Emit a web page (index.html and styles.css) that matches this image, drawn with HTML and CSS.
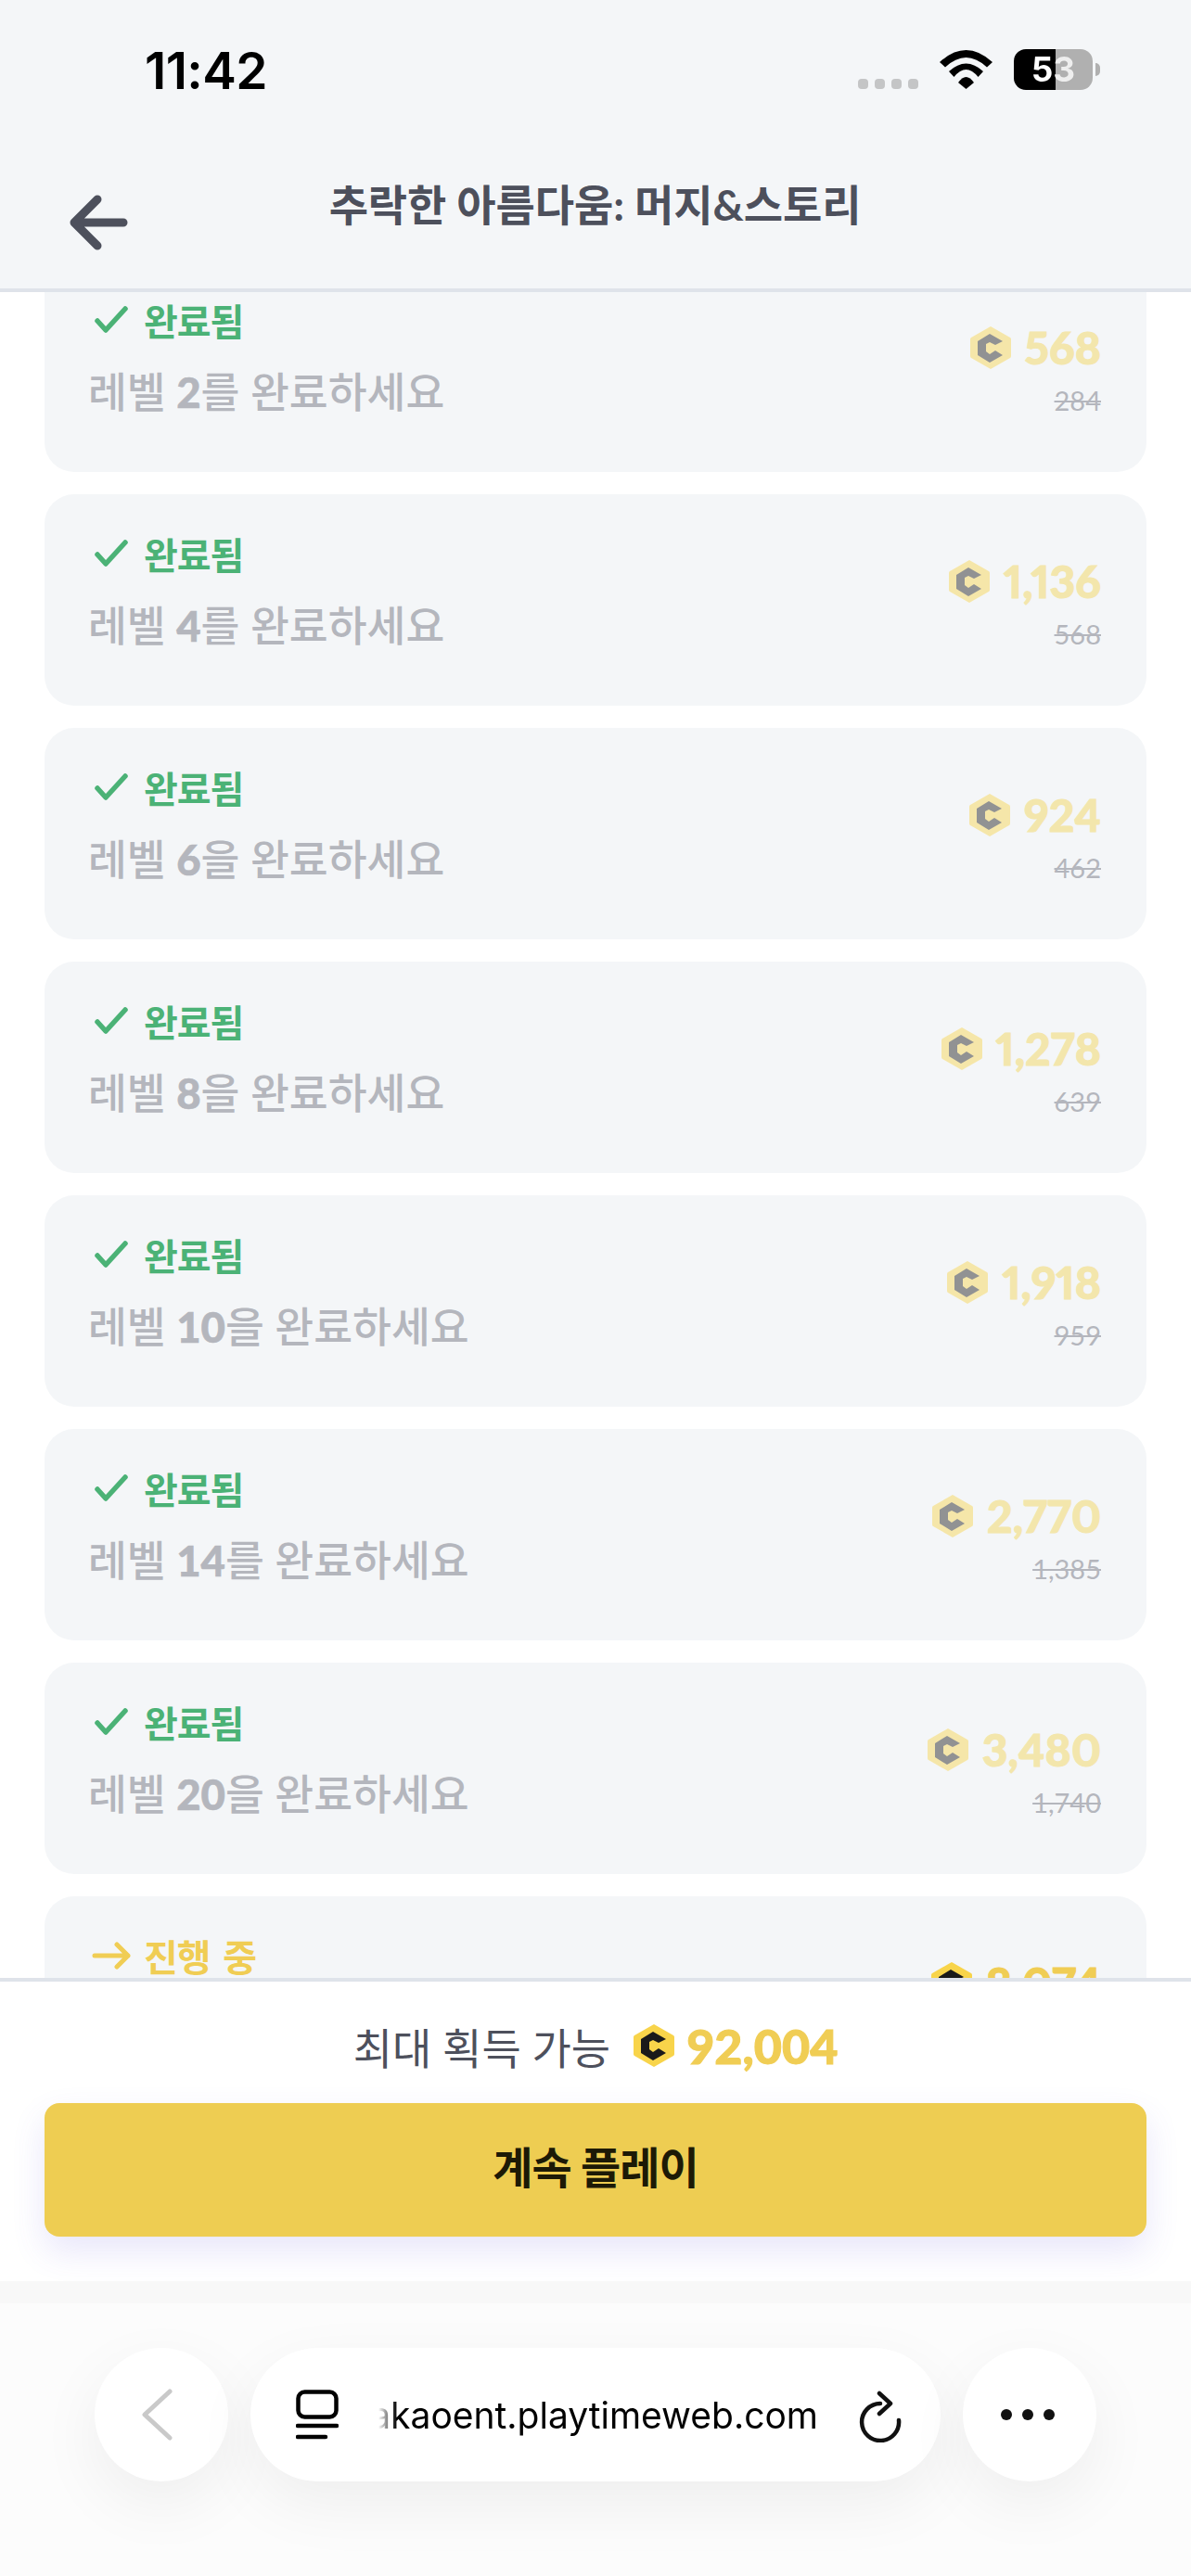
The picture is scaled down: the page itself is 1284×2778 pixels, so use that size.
FILE: index.html
```html
<!DOCTYPE html>
<html lang="ko">
<head>
    <meta charset="UTF-8">
    <meta name="viewport" content="width=device-width, initial-scale=1.0">
    <title>추락한 아름다움: 머지&amp;스토리</title>
    <link rel="stylesheet" href="styles.css">
</head>
<body>
    <svg class="defs">
        <symbol id="coin" viewBox="0 0 46 48">
            <path class="coin-bg" d="M23 1 L44 13 Q45 13.6 45 15 V33 Q45 34.4 44 35 L23 47 L2 35 Q1 34.4 1 33 V15 Q1 13.6 2 13 Z"/>
            <path class="coin-c" d="M22 9 L36 17 L28 21 L22 18 L18 20 V28 L22 31 L28 27 L36 32 L22 40 L9 32 V17 Z"/>
        </symbol>
        <symbol id="check" viewBox="0 0 36 30">
            <path d="M3 16 L12 26 L33 3" fill="none" stroke="currentColor" stroke-width="5.5" stroke-linecap="round" stroke-linejoin="round"/>
        </symbol>
    </svg>

    <div class="top">
        <div class="status">
            <span class="time">11:42</span>
            <div class="status-right">
                <div class="signal"><i></i><i></i><i></i><i></i></div>
                <svg class="wifi" viewBox="0 0 57 42">
                    <path d="M0 13 Q28.500 -13 57 13 L51 18.500 Q28.500 -2.500 6 18.500 Z"/>
                    <path d="M10 23 Q28.500 6 47 23 L41.500 29 Q28.500 13 15.500 29 Z"/>
                    <path d="M20 35 Q28.500 23 37 35 L28.500 42 Z"/>
                </svg>
                <div class="battery"><span class="battery-num">53</span></div>
                <div class="battery-tip"></div>
            </div>
        </div>
        <div class="nav">
            <svg class="back" viewBox="0 0 66 60">
                <path d="M59 30 H6 M31 5 L6 30 L31 55" fill="none" stroke="currentColor" stroke-width="9" stroke-linecap="round" stroke-linejoin="round"/>
            </svg>
            <h1>추락한 아름다움: 머지&amp;스토리</h1>
        </div>
    </div>

    <div class="list">
        <div class="card done">
            <div class="card-left">
                <div class="state"><svg class="state-icon"><use href="#check"/></svg>완료됨</div>
                <div class="task">레벨 <b>2</b>를 완료하세요</div>
            </div>
            <div class="card-right">
                <div class="amount"><svg class="coin"><use href="#coin"/></svg><span class="faded">568</span></div>
                <s class="old">284</s>
            </div>
        </div>
        <div class="card done">
            <div class="card-left">
                <div class="state"><svg class="state-icon"><use href="#check"/></svg>완료됨</div>
                <div class="task">레벨 <b>4</b>를 완료하세요</div>
            </div>
            <div class="card-right">
                <div class="amount"><svg class="coin"><use href="#coin"/></svg><span class="faded">1,136</span></div>
                <s class="old">568</s>
            </div>
        </div>
        <div class="card done">
            <div class="card-left">
                <div class="state"><svg class="state-icon"><use href="#check"/></svg>완료됨</div>
                <div class="task">레벨 <b>6</b>을 완료하세요</div>
            </div>
            <div class="card-right">
                <div class="amount"><svg class="coin"><use href="#coin"/></svg><span class="faded">924</span></div>
                <s class="old">462</s>
            </div>
        </div>
        <div class="card done">
            <div class="card-left">
                <div class="state"><svg class="state-icon"><use href="#check"/></svg>완료됨</div>
                <div class="task">레벨 <b>8</b>을 완료하세요</div>
            </div>
            <div class="card-right">
                <div class="amount"><svg class="coin"><use href="#coin"/></svg><span class="faded">1,278</span></div>
                <s class="old">639</s>
            </div>
        </div>
        <div class="card done">
            <div class="card-left">
                <div class="state"><svg class="state-icon"><use href="#check"/></svg>완료됨</div>
                <div class="task">레벨 <b>10</b>을 완료하세요</div>
            </div>
            <div class="card-right">
                <div class="amount"><svg class="coin"><use href="#coin"/></svg><span class="faded">1,918</span></div>
                <s class="old">959</s>
            </div>
        </div>
        <div class="card done">
            <div class="card-left">
                <div class="state"><svg class="state-icon"><use href="#check"/></svg>완료됨</div>
                <div class="task">레벨 <b>14</b>를 완료하세요</div>
            </div>
            <div class="card-right">
                <div class="amount"><svg class="coin"><use href="#coin"/></svg><span class="faded">2,770</span></div>
                <s class="old">1,385</s>
            </div>
        </div>
        <div class="card done">
            <div class="card-left">
                <div class="state"><svg class="state-icon"><use href="#check"/></svg>완료됨</div>
                <div class="task">레벨 <b>20</b>을 완료하세요</div>
            </div>
            <div class="card-right">
                <div class="amount"><svg class="coin"><use href="#coin"/></svg><span class="faded">3,480</span></div>
                <s class="old">1,740</s>
            </div>
        </div>
        <div class="card active">
            <div class="card-left">
                <div class="state">
                    <svg class="arrow" viewBox="0 0 42 30"><path d="M3 15 H39 M27 3 L39 15 L27 27" fill="none" stroke="currentColor" stroke-width="5" stroke-linecap="round" stroke-linejoin="round"/></svg>
                    진행 중
                </div>
            </div>
            <div class="card-right">
                <div class="amount"><svg class="coin"><use href="#coin"/></svg><span>8,074</span></div>
            </div>
        </div>
    </div>

    <div class="footer">
        <div class="max">
            <span>최대 획득 가능</span>
            <svg class="coin"><use href="#coin"/></svg>
            <b>92,004</b>
        </div>
        <button class="play">계속 플레이</button>
    </div>

    <div class="band"></div>
    <div class="browser">
        <div class="pill round">
            <svg class="b-back" viewBox="0 0 36 56"><path d="M32 3 L5 28 L32 53" fill="none" stroke="#c9c9c9" stroke-width="5" stroke-linecap="round" stroke-linejoin="round"/></svg>
        </div>
        <div class="pill url">
            <svg class="b-tab" viewBox="0 0 46 54">
                <rect x="2.500" y="2.500" width="41" height="27" rx="7" fill="none" stroke="#000" stroke-width="4.500"/>
                <path d="M2 39 H44 M2 51 H32" fill="none" stroke="#000" stroke-width="4.500" stroke-linecap="round"/>
            </svg>
            <div class="url-text"><span>kakaoent.playtimeweb.com</span></div>
            <svg class="b-reload" viewBox="0 0 50 56"><path d="M24 14 A20 20 0 1 0 44 32 M23 3 L35 14 L23 25" fill="none" stroke="#111" stroke-width="4.500" stroke-linecap="round" stroke-linejoin="round"/></svg>
        </div>
        <div class="pill round">
            <div class="dots"><i></i><i></i><i></i></div>
        </div>
    </div>
</body>
</html>
```

FILE: styles.css
```css
* {
    box-sizing: border-box;
}

html, body {
    margin: 0;
    height: 2778px;
    overflow: hidden;
}

body {
    display: flex;
    flex-direction: column;
    width: 1284px;
    background: #fff;
    font-family: "Lato", "Noto Sans CJK KR", sans-serif;
}

.defs {
    position: absolute;
    width: 0;
    height: 0;
}

/* top bar */
.top {
    height: 315px;
    flex: none;
    background: #f4f6f8;
    border-bottom: 4px solid #dfe3ea;
    position: relative;
    z-index: 2;
}

.status {
    height: 130px;
    display: flex;
    justify-content: space-between;
    padding: 44px 98px 0 156px;
}

.time {
    font-family: "Inter", sans-serif;
    font-weight: 600;
    font-size: 55px;
    line-height: 64px;
    letter-spacing: -0.6px;
    color: #000;
}

.status-right {
    display: flex;
    align-items: flex-start;
}

.signal {
    display: flex;
    gap: 7px;
    margin-top: 41px;
    margin-right: 23px;
}

.signal i {
    width: 11px;
    height: 11px;
    border-radius: 4px;
    background: #c4c5c6;
}

.wifi {
    width: 57px;
    height: 42px;
    margin-top: 10px;
    margin-right: 23px;
    flex: none;
}

.battery {
    width: 85px;
    height: 44px;
    margin-top: 9px;
    border-radius: 13px;
    background: linear-gradient(to right, #000 0 53%, #b0b0b0 53% 100%);
    text-align: center;
}

.battery-num {
    display: inline-block;
    font-family: "Inter", sans-serif;
    font-weight: 700;
    font-size: 37px;
    line-height: 44px;
    background: linear-gradient(to right, #fff 0 52%, #eee 52% 100%);
    -webkit-background-clip: text;
    background-clip: text;
    color: transparent;
}

.battery-tip {
    width: 5px;
    height: 14px;
    margin-top: 24px;
    margin-left: 3px;
    border-radius: 0 5px 5px 0;
    background: #b0b0b0;
}

.nav {
    height: 181px;
    position: relative;
    text-align: center;
}

.nav h1 {
    margin: 0;
    padding-top: 59px;
    padding-right: 1px;
    font-size: 46px;
    line-height: 64px;
    font-weight: 700;
    letter-spacing: -0.1px;
    color: #4d505c;
}

.back {
    position: absolute;
    left: 74px;
    top: 80px;
    width: 66px;
    height: 60px;
    color: #4d505c;
}

/* quest list */
.list {
    flex: 1;
    min-height: 0;
    overflow: hidden;
    padding: 0 48px;
    display: flex;
    flex-direction: column;
    gap: 24px;
}

.card {
    flex: none;
    height: 228px;
    padding: 38px 50px 0;
    border-radius: 32px;
    background: #f4f6f8;
    display: flex;
    justify-content: space-between;
    align-items: flex-start;
}

.card:first-child {
    margin-top: -34px;
}

.card-left {
    display: flex;
    flex-direction: column;
}

.state {
    display: flex;
    align-items: center;
    gap: 17px;
    height: 52px;
    font-size: 40px;
    font-weight: 700;
    letter-spacing: -1px;
}

.state-icon {
    width: 36px;
    height: 30px;
    margin-left: 4px;
}

.arrow {
    width: 42px;
    height: 30px;
    margin-left: 1px;
}

.active .state {
    gap: 14px;
    word-spacing: 5px;
    color: #f0cd54;
}

.done .state {
    color: #4bb276;
}

.task {
    margin: 22px 0 0 -3px;
    font-size: 45.5px;
    line-height: 60px;
    font-weight: 500;
    color: #b4b6bd;
}

.task b {
    font-weight: 900;
    -webkit-text-stroke: 0.6px currentColor;
}

.card-right {
    display: flex;
    flex-direction: column;
    align-items: flex-end;
    margin-top: 28px;
    margin-right: -1px;
}

.amount {
    display: flex;
    align-items: center;
    gap: 14px;
    font-size: 48px;
    line-height: 56px;
    font-weight: 900;
    font-variant-numeric: proportional-nums;
    -webkit-text-stroke: 1px currentColor;
    color: #f0cd54;
}

.coin {
    width: 46px;
    height: 48px;
    flex: none;
}

.coin-bg {
    fill: #f8d44a;
}

.coin-c {
    fill: #1a1a1a;
}

.done .coin {
    opacity: 0.45;
}

.faded {
    color: #f3e6ac;
}

.old {
    margin-top: 10px;
    font-size: 29px;
    line-height: 38px;
    color: #b4b6bd;
}

/* bottom call to action */
.footer {
    flex: none;
    height: 327px;
    position: relative;
    z-index: 2;
    padding: 0 48px;
    background: #fff;
    border-top: 4px solid #dfe3ea;
}

.max {
    height: 131px;
    padding-top: 7px;
    display: flex;
    align-items: center;
    justify-content: center;
    gap: 24px;
    font-size: 46px;
    color: #4d505c;
}

.max b {
    margin-left: -12px;
    font-size: 52px;
    font-weight: 900;
    -webkit-text-stroke: 1px currentColor;
    color: #f0cd54;
}

.play {
    display: block;
    width: 100%;
    height: 144px;
    padding: 0 0 11px;
    border: none;
    border-radius: 16px;
    background: #eecd52;
    color: #1d1a06;
    font-family: inherit;
    font-size: 47px;
    font-weight: 700;
    letter-spacing: -1px;
    box-shadow: 0 16px 36px rgba(90, 80, 220, 0.14);
}

/* safari toolbar */
.band {
    flex: none;
    height: 24px;
    background: #f8f8f8;
    position: relative;
    z-index: 3;
}

.browser {
    flex: none;
    height: 294px;
    padding: 48px 102px 0;
    background: #fcfcfc;
    display: flex;
    align-items: flex-start;
    gap: 24px;
    position: relative;
    z-index: 3;
}

.pill {
    height: 144px;
    border-radius: 72px;
    background: #fff;
    box-shadow: 0 24px 70px rgba(0, 0, 0, 0.06);
    display: flex;
    align-items: center;
    justify-content: center;
}

.round {
    width: 144px;
    flex: none;
}

.url {
    flex: 1;
    padding-left: 49px;
    gap: 43px;
    justify-content: flex-start;
}

.b-back {
    width: 36px;
    height: 56px;
    margin-right: 11px;
}

.b-tab {
    width: 46px;
    height: 54px;
    flex: none;
}

.b-reload {
    width: 50px;
    height: 56px;
    flex: none;
    margin-top: 4px;
}

.url-text {
    width: 474px;
    overflow: hidden;
    display: flex;
    justify-content: flex-end;
    white-space: nowrap;
    font-family: "Inter", sans-serif;
    font-size: 39px;
    color: #000;
    -webkit-mask-image: linear-gradient(to right, transparent 0, #000 20px);
    mask-image: linear-gradient(to right, transparent 0, #000 20px);
}

.dots {
    display: flex;
    gap: 11px;
    margin-right: 4px;
}

.dots i {
    width: 12px;
    height: 12px;
    border-radius: 50%;
    background: #111;
}
```
